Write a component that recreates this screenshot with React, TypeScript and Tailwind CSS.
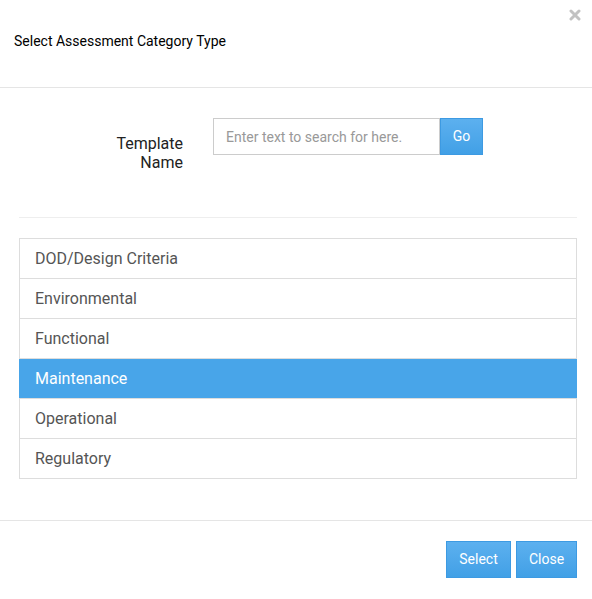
import React, { useState } from 'react'

const categories = [
  'DOD/Design Criteria',
  'Environmental',
  'Functional',
  'Maintenance',
  'Operational',
  'Regulatory',
]

export default function App() {
  const [selected, setSelected] = useState('Maintenance')
  const [query, setQuery] = useState('')

  return (
    <div className="w-[592px] h-[599px] bg-white font-['Roboto',sans-serif] relative">
      {/* Header */}
      <div className="h-[88px] border-b border-[#e5e5e5] px-[14px] pt-[31px]">
        <h4 className="text-[14px] leading-5 text-black">Select Assessment Category Type</h4>
      </div>
      <button className="absolute right-[11px] top-[9px] w-3 h-3 text-[#c2c2c2]">
        <svg viewBox="0 0 12 12" className="w-3 h-3">
          <path d="M2 2 L10 10 M10 2 L2 10" stroke="currentColor" strokeWidth="3" strokeLinecap="round" />
        </svg>
      </button>

      {/* Body */}
      <div className="px-[19px] pt-[30px]">
        <div className="flex items-start">
          <label className="w-[164px] text-right text-[16px] leading-[19px] text-[#222] pt-[16px]">
            Template
            <br />
            Name
          </label>
          <div className="flex ml-[30px]">
            <input
              value={query}
              onChange={(e) => setQuery(e.target.value)}
              placeholder="Enter text to search for here."
              className="w-[227px] h-[37px] border border-[#ccc] px-3 text-[14px] text-[#555] placeholder-[#999] outline-none"
            />
            <button className="w-[43px] h-[37px] bg-gradient-to-b from-[#5cb0ef] to-[#41a0e6] border border-[#3d9ae2] text-white text-[14px]">
              Go
            </button>
          </div>
        </div>

        <div className="mt-[45px] w-[558px] border-t border-[#eee]" />

        <div className="mt-5 border border-[#ddd] w-[558px]">
          {categories.map((c, i) => (
            <div
              key={c}
              onClick={() => setSelected(c)}
              className={`px-[15px] flex items-center text-[16px] cursor-pointer ${
                i > 0 ? 'h-10 border-t border-[#ddd]' : 'h-[39px]'
              } ${selected === c ? 'bg-[#48a5e9] text-white -mx-px px-[16px] border-[#48a5e9]' : 'text-[#555]'}`}
            >
              {c}
            </div>
          ))}
        </div>
      </div>

      {/* Footer */}
      <div className="mt-[41px] border-t border-[#e5e5e5] pt-5 px-[15px] flex justify-end gap-[5px]">
        <button className="w-[65px] h-[37px] bg-gradient-to-b from-[#5cb0ef] to-[#41a0e6] border border-[#3d9ae2] text-white text-[14px]">
          Select
        </button>
        <button className="w-[61px] h-[37px] bg-gradient-to-b from-[#5cb0ef] to-[#41a0e6] border border-[#3d9ae2] text-white text-[14px]">
          Close
        </button>
      </div>
    </div>
  )
}
